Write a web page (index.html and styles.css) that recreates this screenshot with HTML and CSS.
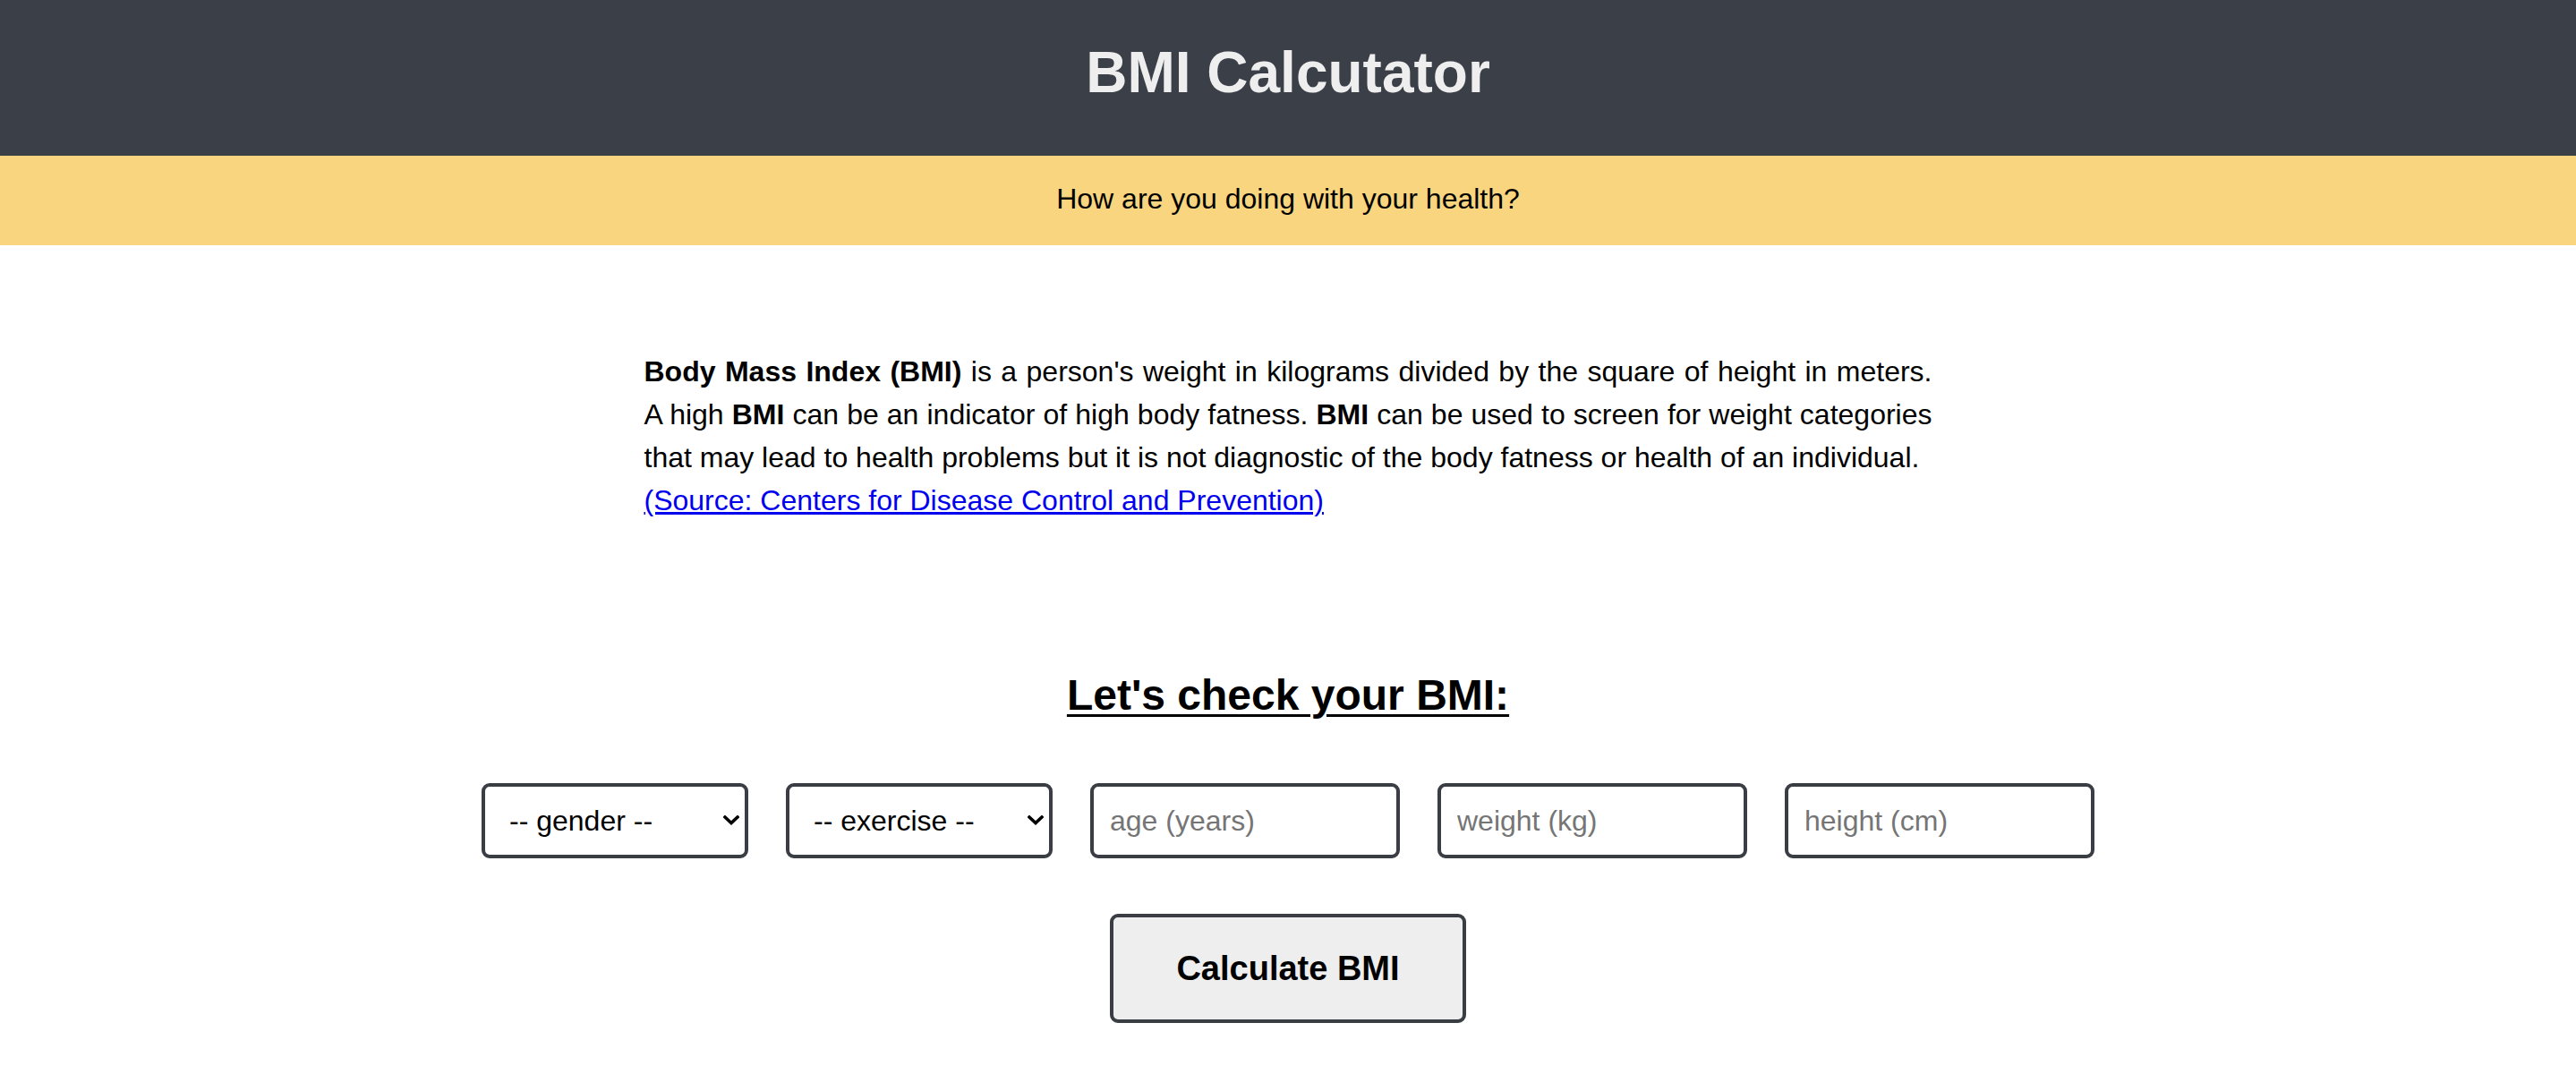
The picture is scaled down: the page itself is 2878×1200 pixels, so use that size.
FILE: index.html
```html
<!DOCTYPE html>
<html lang="en">
<head>
<meta charset="utf-8">
<title>BMI Calculator</title>
<link rel="stylesheet" href="styles.css">
</head>
<body>
<header class="topbar">
  <h1 class="title">BMI Calcutator</h1>
</header>
<div class="tagline">How are you doing with your health?</div>
<main class="content">
  <p class="intro"><b>Body Mass Index (BMI)</b> is a person's weight in kilograms divided by the square of height in meters. A high <b>BMI</b> can be an indicator of high body fatness. <b>BMI</b> can be used to screen for weight categories that may lead to health problems but it is not diagnostic of the body fatness or health of an individual.<br><a class="source" href="#">(Source: Centers for Disease Control and Prevention)</a></p>
  <h2 class="check">Let's check your BMI:</h2>
  <form class="fields">
    <span class="select-wrap">
      <select class="field select">
        <option>-- gender --</option>
      </select>
      <svg class="chevron" width="18" height="11" viewBox="0 0 18 11"><polyline points="2,2 9,8.5 16,2" fill="none" stroke="#000" stroke-width="3.6" stroke-linecap="square"/></svg>
    </span>
    <span class="select-wrap">
      <select class="field select">
        <option>-- exercise --</option>
      </select>
      <svg class="chevron" width="18" height="11" viewBox="0 0 18 11"><polyline points="2,2 9,8.5 16,2" fill="none" stroke="#000" stroke-width="3.6" stroke-linecap="square"/></svg>
    </span>
    <input class="field text" type="text" placeholder="age (years)">
    <input class="field text" type="text" placeholder="weight (kg)">
    <input class="field text" type="text" placeholder="height (cm)">
  </form>
  <div class="actions">
    <button class="calc" type="button">Calculate BMI</button>
  </div>
</main>
</body>
</html>
```
FILE: styles.css
```css
* {
  box-sizing: border-box;
}

body {
  margin: 0;
  font-family: "Liberation Sans", Arial, Helvetica, sans-serif;
  color: #000;
  background: #fff;
}

.topbar {
  height: 174px;
  background: #3b3f47;
  padding-top: 44px;
}

.title {
  margin: 0;
  text-align: center;
  font-size: 64px;
  line-height: 74px;
  font-weight: bold;
  color: #eeeeee;
}

.tagline {
  background: #f8d57e;
  height: 100px;
  padding-top: 30px;
  text-align: center;
  font-size: 32px;
  line-height: 36px;
}

.content {
  display: flex;
  flex-direction: column;
  align-items: center;
}

.intro {
  width: 50%;
  margin: 117px 0 0;
  font-size: 32px;
  line-height: 48px;
  text-align: justify;
}

.source {
  color: #0000ee;
}

.check {
  margin: 166px 0 0;
  font-size: 48px;
  line-height: 56px;
  font-weight: bold;
  text-decoration: underline;
  text-decoration-thickness: 3px;
  text-underline-offset: 5px;
}

.fields {
  display: flex;
  gap: 42px;
  margin-top: 70px;
}

.select-wrap {
  position: relative;
  display: block;
}

.field {
  height: 84px;
  border: 4px solid #3a3d44;
  border-radius: 9px;
  background: #fff;
  font-family: "Liberation Sans", Arial, Helvetica, sans-serif;
  font-size: 32px;
  color: #000;
  margin: 0;
  outline: none;
}

.select {
  width: 298px;
  appearance: none;
  -webkit-appearance: none;
  padding: 0 40px 0 27px;
}

.chevron {
  position: absolute;
  right: 10px;
  top: 36px;
  pointer-events: none;
}

.text {
  width: 346px;
  padding: 0 18px;
}

.text::placeholder {
  color: #757575;
}

.actions {
  margin-top: 62px;
}

.calc {
  width: 398px;
  height: 122px;
  background: #eeeeee;
  border: 4px solid #3a3d44;
  border-radius: 9px;
  font-family: "Liberation Sans", Arial, Helvetica, sans-serif;
  font-size: 38px;
  font-weight: bold;
  color: #000;
}
```
